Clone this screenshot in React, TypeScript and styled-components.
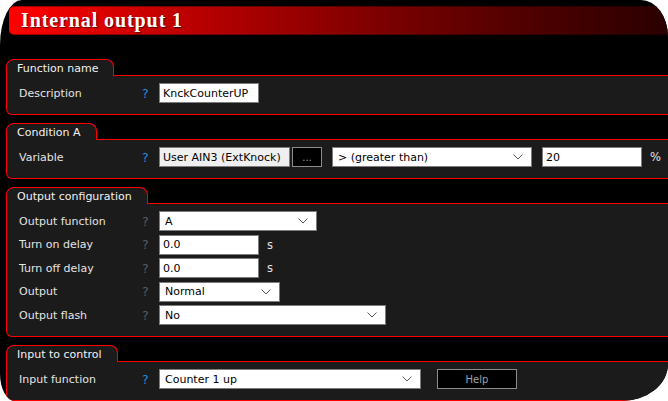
import React from 'react'
import styled, { createGlobalStyle } from 'styled-components'

const GlobalStyle = createGlobalStyle`
  html, body {
    margin: 0;
    padding: 0;
    background: #ffffff;
  }
`

const Window = styled.div`
  width: 668px;
  height: 401px;
  background: #000;
  overflow: hidden;
  border-radius: 22px 27px 47px 15px / 45px 37px 37px 27px;
  font-family: "DejaVu Sans", Verdana, sans-serif;
  font-size: 11px;
  color: #e4e4e4;
`

const TitleBar = styled.div`
  margin: 6px 0 0 9px;
  height: 29px;
  box-sizing: border-box;
  border-radius: 5px 0 0 5px;
  background: linear-gradient(to right, #ff0000 0%, #c00000 25%, #8a0000 50%, #560000 75%, #2a0000 100%);
  border-top: 1px solid rgba(0, 0, 0, 0.35);
  border-bottom: 1px solid rgba(0, 0, 0, 0.35);
  display: flex;
  align-items: center;
  padding-left: 12px;
`

const Title = styled.h1`
  margin: 0;
  font-family: "Liberation Serif", "Times New Roman", serif;
  font-weight: bold;
  font-size: 20px;
  color: #fff;
  letter-spacing: 0.9px;
  text-shadow: 1px 1px 1px rgba(0, 0, 0, 0.6);
`

const Sections = styled.div`
  display: flex;
  flex-direction: column;
  gap: 8px;
  margin: 24px 0 0 6px;
  width: 700px;
`

const Panel = styled.section``

const PanelHead = styled.div`
  display: flex;
  height: 17px;
`

const Tab = styled.div`
  box-sizing: border-box;
  height: 17px;
  padding: 2px 15px 0 10px;
  background: #1b1b1b;
  border: 1px solid #ff0000;
  border-bottom: none;
  border-radius: 8px 8px 0 0;
  color: #f2f2f2;
  font-size: 11px;
  line-height: 14px;
  white-space: nowrap;
`

const HeadLine = styled.div`
  flex: 1;
  border-bottom: 1px solid #ff0000;
`

const Body = styled.div`
  background: #1b1b1b;
  border: 1px solid #ff0000;
  border-top: none;
  border-radius: 0 0 0 6px;
  padding: 7px 0 11px 12px;
  display: flex;
  flex-direction: column;
  gap: 3.5px;
`

const Row = styled.div`
  display: grid;
  grid-template-columns: 123px 17px auto;
  align-items: center;
  height: 20px;
`

const Label = styled.span`
  color: #e4e4e4;
  white-space: nowrap;
`

const Hint = styled.span<{ $muted?: boolean }>`
  color: ${p => (p.$muted ? '#5c5c5c' : '#1e8fdc')};
  font-size: 12.5px;
`

const Controls = styled.div`
  display: flex;
  align-items: center;
`

const TextBox = styled.input<{ $w: number; $grey?: boolean }>`
  box-sizing: border-box;
  width: ${p => p.$w}px;
  height: 20px;
  margin: 0;
  padding: 0 3px;
  border: 1px solid #7c7c7c;
  background: ${p => (p.$grey ? '#efefef' : '#fff')};
  color: #000;
  font-family: "DejaVu Sans", Verdana, sans-serif;
  font-size: 11px;
  outline: none;
`

const SelectBox = styled.div<{ $w: number }>`
  box-sizing: border-box;
  width: ${p => p.$w}px;
  height: 20px;
  padding: 0 8px 0 5px;
  border: 1px solid #7c7c7c;
  background: #fff;
  color: #000;
  display: flex;
  align-items: center;
  justify-content: space-between;
  white-space: nowrap;
`

const DarkButton = styled.div<{ $w: number }>`
  box-sizing: border-box;
  width: ${p => p.$w}px;
  height: 20px;
  border: 1px solid #8c8c8c;
  background: #000;
  color: #9aa3a8;
  font-size: 10px;
  display: flex;
  align-items: center;
  justify-content: center;
`

const Unit = styled.span<{ $gap: number }>`
  margin-left: ${p => p.$gap}px;
  color: #e4e4e4;
  font-size: 11.5px;
`

const Chevron = () => (
  <svg width="10" height="6" viewBox="0 0 10 6">
    <path d="M0.5 0.5 L5 5 L9.5 0.5" fill="none" stroke="#555" strokeWidth="1" />
  </svg>
)

const Select = ({ w, value }: { w: number; value: string }) => (
  <SelectBox $w={w}>
    <span>{value}</span>
    <Chevron />
  </SelectBox>
)

type FieldProps = {
  label: string
  muted?: boolean
  children: React.ReactNode
}

const Field = ({ label, muted, children }: FieldProps) => (
  <Row>
    <Label>{label}</Label>
    <Hint $muted={muted}>?</Hint>
    <Controls>{children}</Controls>
  </Row>
)

const Section = ({ title, children }: { title: string; children: React.ReactNode }) => (
  <Panel>
    <PanelHead>
      <Tab>{title}</Tab>
      <HeadLine />
    </PanelHead>
    <Body>{children}</Body>
  </Panel>
)

export default function App() {
  return (
    <Window>
      <GlobalStyle />
      <TitleBar>
        <Title>Internal output 1</Title>
      </TitleBar>
      <Sections>
        <Section title="Function name">
          <Field label="Description">
            <TextBox $w={100} defaultValue="KnckCounterUP" />
          </Field>
        </Section>
        <Section title="Condition A">
          <Field label="Variable">
            <TextBox $w={131} $grey defaultValue="User AIN3 (ExtKnock)" readOnly />
            <DarkButton $w={30} style={{ marginLeft: 2 }}>...</DarkButton>
            <div style={{ marginLeft: 10 }}>
              <Select w={200} value="> (greater than)" />
            </div>
            <TextBox $w={100} defaultValue="20" style={{ marginLeft: 10 }} />
            <Unit $gap={8}>%</Unit>
          </Field>
        </Section>
        <Section title="Output configuration">
          <Field label="Output function" muted>
            <Select w={158} value="A" />
          </Field>
          <Field label="Turn on delay" muted>
            <TextBox $w={100} defaultValue="0.0" />
            <Unit $gap={8}>s</Unit>
          </Field>
          <Field label="Turn off delay" muted>
            <TextBox $w={100} defaultValue="0.0" />
            <Unit $gap={8}>s</Unit>
          </Field>
          <Field label="Output" muted>
            <Select w={121} value="Normal" />
          </Field>
          <Field label="Output flash" muted>
            <Select w={227} value="No" />
          </Field>
        </Section>
        <Section title="Input to control">
          <Field label="Input function">
            <Select w={262} value="Counter 1 up" />
            <DarkButton $w={80} style={{ marginLeft: 16 }}>Help</DarkButton>
          </Field>
        </Section>
      </Sections>
    </Window>
  )
}
